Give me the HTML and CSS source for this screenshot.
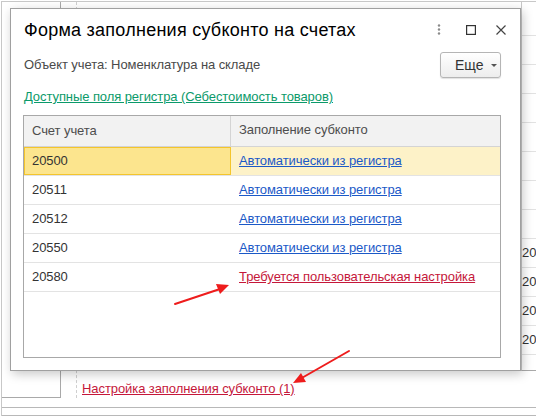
FILE: index.html
```html
<!DOCTYPE html>
<html lang="ru">
<head>
<meta charset="utf-8">
<title>Форма заполнения субконто на счетах</title>
<link rel="stylesheet" href="styles.css">
</head>
<body>
<div class="desk">
  <div class="frame">
    <div class="work">
      <div class="side"></div>
      <div class="content">
        <a class="link-red bottom-link" href="#">Настройка заполнения субконто (1)</a>
      </div>
      <div class="rgrid">
        <div class="rhead"></div>
        <div class="rrow"></div>
        <div class="rrow"></div>
        <div class="rrow"></div>
        <div class="rrow"></div>
        <div class="rrow"></div>
        <div class="rrow"></div>
        <div class="rrow"></div>
        <div class="rrow">20</div>
        <div class="rrow">20</div>
        <div class="rrow">20</div>
        <div class="rrow">20</div>
      </div>
    </div>
    <div class="status"></div>
  </div>

  <div class="dialog">
    <div class="dlg-head">
      <h1 class="dlg-title">Форма заполнения субконто на счетах</h1>
      <div class="dlg-tools">
        <svg class="tool t-dots" width="6" height="14" viewBox="0 0 6 14"><circle cx="3" cy="2.5" r="1.2" fill="#8a8a8a"/><circle cx="3" cy="6.5" r="1.2" fill="#8a8a8a"/><circle cx="3" cy="10.5" r="1.2" fill="#8a8a8a"/></svg>
        <svg class="tool t-max" width="10" height="14" viewBox="0 0 10 14"><rect x="0.6" y="2.6" width="8.8" height="8.8" fill="none" stroke="#333" stroke-width="1.2"/></svg>
        <svg class="tool t-close" width="10" height="14" viewBox="0 0 10 14"><path d="M0.5 2.5 L9.5 11.5 M9.5 2.5 L0.5 11.5" stroke="#444" stroke-width="1.2" fill="none"/></svg>
      </div>
    </div>
    <div class="dlg-bar">
      <span class="obj">Объект учета: Номенклатура на складе</span>
      <button class="more" type="button">Еще <span class="caret"></span></button>
    </div>
    <div class="dlg-link"><a class="link-green" href="#">Доступные поля регистра (Себестоимость товаров)</a></div>
    <div class="grid">
      <div class="grow ghead">
        <div class="c1">Счет учета</div>
        <div class="c2">Заполнение субконто</div>
      </div>
      <div class="grow sel">
        <div class="c1">20500</div>
        <div class="c2"><a class="link-blue" href="#">Автоматически из регистра</a></div>
      </div>
      <div class="grow">
        <div class="c1">20511</div>
        <div class="c2"><a class="link-blue" href="#">Автоматически из регистра</a></div>
      </div>
      <div class="grow">
        <div class="c1">20512</div>
        <div class="c2"><a class="link-blue" href="#">Автоматически из регистра</a></div>
      </div>
      <div class="grow">
        <div class="c1">20550</div>
        <div class="c2"><a class="link-blue" href="#">Автоматически из регистра</a></div>
      </div>
      <div class="grow">
        <div class="c1">20580</div>
        <div class="c2"><a class="link-red" href="#">Требуется пользовательская настройка</a></div>
      </div>
    </div>
  </div>

  <svg class="arrows" width="536" height="416" viewBox="0 0 536 416">
    <g stroke="#ee1c1c" stroke-width="2" fill="#ee1c1c" stroke-linecap="round">
      <line x1="175" y1="304" x2="220" y2="289"/>
      <polygon points="229,285 216,284 220,294" stroke="none"/>
      <line x1="349" y1="351" x2="300" y2="379"/>
      <polygon points="293,383 301,373 306,382" stroke="none"/>
    </g>
  </svg>
</div>
</body>
</html>
```

FILE: styles.css
```css
* { box-sizing: border-box; }

body {
  margin: 0;
  background: #fff;
  font-family: "Liberation Sans", Arial, sans-serif;
  font-size: 13px;
  line-height: 16px;
  letter-spacing: -0.08px;
  color: #333;
}

a { text-decoration: underline; }

.desk {
  position: relative;
  width: 536px;
  height: 416px;
  overflow: hidden;
  background: #fff;
}

/* background form */
.frame {
  display: flex;
  flex-direction: column;
  height: 415px;
  margin: 1px 0 0 1px;
  border-top: 1px solid #c8c8c8;
  border-left: 1px solid #c8c8c8;
}

.work {
  display: flex;
  height: 396px;
}

.side {
  width: 59px;
  border-right: 1px solid #a9a9a9;
  border-bottom: 1px solid #a9a9a9;
}

.content {
  flex: 1;
  display: flex;
  flex-direction: column;
  justify-content: flex-end;
  margin-left: 15px;
  padding: 0 0 1px 5px;
  border-left: 1px dashed #cfcfcf;
}

.bottom-link { line-height: 16px; }

.rgrid {
  width: 16px;
  height: 369px;
  border-left: 1px solid #c8c8c8;
  border-right: 1px solid #b5b5b5;
  border-bottom: 1px solid #a9a9a9;
  display: flex;
  flex-direction: column;
  overflow: hidden;
  white-space: nowrap;
  margin-right: -1px;
}

.rhead {
  height: 34px;
  flex: none;
  border-bottom: 1px solid #e2e2e2;
}

.rrow {
  height: 29px;
  flex: none;
  border-bottom: 1px solid #e2e2e2;
  padding-left: 0;
  line-height: 28px;
  letter-spacing: 0;
  color: #333;
}

.status {
  height: 9px;
  margin-top: 9px;
  border-top: 1px solid #b8b8b8;
  border-bottom: 1px solid #b8b8b8;
}

/* dialog */
.dialog {
  position: absolute;
  left: 10px;
  top: 8px;
  width: 511px;
  height: 363px;
  display: flex;
  flex-direction: column;
  padding: 10px 19px 0 12px;
  background: #fff;
  border: 1px solid #a0a0a0;
  box-shadow: 2px 3px 10px rgba(0, 0, 0, 0.22);
}

.dlg-head {
  display: flex;
  align-items: center;
  justify-content: space-between;
  height: 22px;
}

.dlg-title {
  margin: 0 0 0 1px;
  font-size: 18px;
  line-height: 22px;
  font-weight: normal;
  letter-spacing: 0.25px;
  color: #000;
}

.dlg-tools {
  display: flex;
  align-items: center;
  margin-right: -5px;
}

.tool { display: block; }
.t-max { margin-left: 24px; }
.t-close { margin-left: 20px; }

.dlg-bar {
  display: flex;
  align-items: center;
  justify-content: space-between;
  height: 26px;
  margin-top: 11px;
}

.obj {
  margin-left: 1px;
  color: #4a4a4a;
}

.more {
  display: flex;
  align-items: center;
  gap: 7px;
  height: 26px;
  width: 61px;
  padding: 0 0 0 14px;
  font: inherit;
  font-size: 14px;
  letter-spacing: 0;
  color: #333;
  border: 1px solid #b5b5b5;
  border-radius: 3px;
  background: linear-gradient(#ffffff, #ededed);
  box-shadow: 0 1px 1px rgba(0, 0, 0, 0.12);
}

.caret {
  width: 0;
  height: 0;
  border-left: 3px solid transparent;
  border-right: 3px solid transparent;
  border-top: 3px solid #555;
}

.dlg-link {
  margin: 11px 0 0 1px;
}

.link-green { color: #0b9a6a; }
.link-blue { color: #1b59c7; }
.link-red { color: #c5173a; }

.grid {
  margin-top: 10px;
  height: 243px;
  border: 1px solid #a8a8a8;
}

.grow {
  display: flex;
  height: 29px;
  border-bottom: 1px solid #e3e3e3;
}

.grow .c1 {
  width: 207px;
  padding: 6px 8px 0 8px;
}

.grow .c2 {
  flex: 1;
  padding: 6px 8px 0 8px;
}

.ghead {
  height: 31px;
  background: #f2f2f2;
  border-bottom: 1px solid #d4d4d4;
  color: #4d4d4d;
}

.ghead .c1 {
  padding-top: 7px;
  border-right: 1px solid #d4d4d4;
  width: 207px;
}

.sel .c1 {
  background: #fce58e;
  box-shadow: inset 0 0 0 1px #f4c52c;
}

.sel .c2 { background: #fdf2c8; }

.arrows {
  position: absolute;
  left: 0;
  top: 0;
  pointer-events: none;
}
```
